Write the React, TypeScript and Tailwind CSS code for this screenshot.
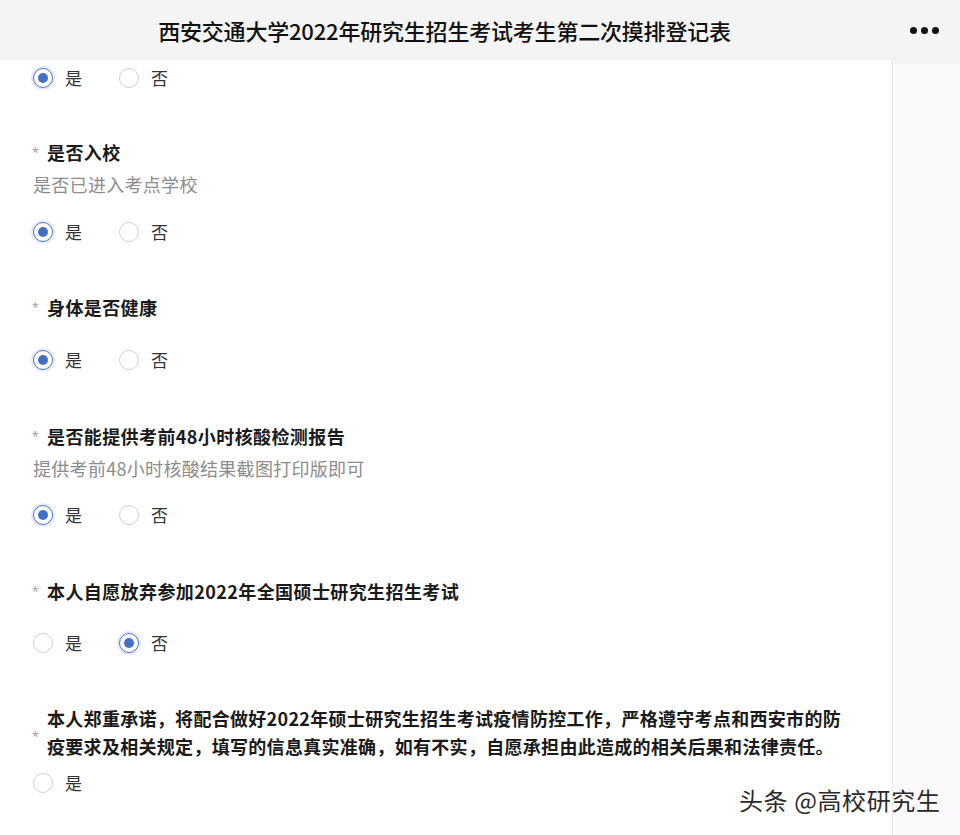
import React from 'react'

type Opt = { label: string; checked?: boolean }

function Radio({ label, checked }: Opt) {
  return (
    <div className="flex items-center w-[86px]">
      {checked ? (
        <span className="w-[20px] h-[20px] rounded-full border border-[#4a74c6] flex items-center justify-center shadow-[0_0_0_2px_rgba(74,116,198,0.15)]">
          <span className="w-[10px] h-[10px] rounded-full bg-[#4470c4]" />
        </span>
      ) : (
        <span className="w-[20px] h-[20px] rounded-full border border-[#cfcfcf] bg-white" />
      )}
      <span className="ml-[12px] text-[17px] text-[#333]">{label}</span>
    </div>
  )
}

function RadioRow({ options, className = '' }: { options: Opt[]; className?: string }) {
  return (
    <div className={`flex items-center h-[36px] ${className}`}>
      {options.map((o) => (
        <Radio key={o.label} {...o} />
      ))}
    </div>
  )
}

function Star({ className = '' }: { className?: string }) {
  return (
    <span
      className={`w-[15px] text-[17px] leading-none text-[#a8a8a8] shrink-0 ${className}`}
      style={{ fontFamily: '"Liberation Sans", sans-serif' }}
    >
      *
    </span>
  )
}

function Title({ children }: { children: React.ReactNode }) {
  return (
    <div className="h-[32px] flex items-center -ml-[1px]">
      <Star className="mt-[2px]" />
      <span className="text-[18px] font-bold text-[#1a1a1a] leading-[28px] tracking-[0.4px]">{children}</span>
    </div>
  )
}

function Desc({ children }: { children: React.ReactNode }) {
  return <div className="h-[32px] flex items-center text-[18px] text-[#8c8c8c] tracking-[0.3px]">{children}</div>
}

const yes: Opt[] = [{ label: '是', checked: true }, { label: '否' }]
const no: Opt[] = [{ label: '是' }, { label: '否', checked: true }]

export default function App() {
  return (
    <div
      className="relative w-[960px] h-[835px] overflow-hidden bg-[#f4f4f4]"
      style={{ fontFamily: '"Noto Sans CJK SC", "Noto Sans", sans-serif' }}
    >
      {/* Header */}
      <div className="h-[60px] flex items-center justify-center relative">
        <h1 className="text-[22px] font-medium text-[#111] tracking-[-0.2px] -ml-[71px]">
          西安交通大学2022年研究生招生考试考生第二次摸排登记表
        </h1>
        <div className="absolute right-[21px] top-[27px] flex gap-[4px]">
          <span className="w-[7px] h-[7px] rounded-full bg-[#111]" />
          <span className="w-[7px] h-[7px] rounded-full bg-[#111]" />
          <span className="w-[7px] h-[7px] rounded-full bg-[#111]" />
        </div>
      </div>

      <div className="flex h-[775px]">
        {/* Form card */}
        <div className="w-[893px] bg-white pl-[33px] border-r border-[#e6e6e6]">
          <RadioRow options={yes} />

          <div className="mt-[40px]">
            <Title>是否入校</Title>
            <Desc>是否已进入考点学校</Desc>
            <RadioRow options={yes} className="mt-[14px]" />
          </div>

          <div className="mt-[41px]">
            <Title>身体是否健康</Title>
            <RadioRow options={yes} className="mt-[19px]" />
          </div>

          <div className="mt-[42px]">
            <Title>是否能提供考前48小时核酸检测报告</Title>
            <Desc>提供考前48小时核酸结果截图打印版即可</Desc>
            <RadioRow options={yes} className="mt-[13px]" />
          </div>

          <div className="mt-[42px]">
            <Title>本人自愿放弃参加2022年全国硕士研究生招生考试</Title>
            <RadioRow options={no} className="mt-[18px]" />
          </div>

          <div className="mt-[43px]">
            <div className="flex items-center -ml-[1px] pr-[40px]">
              <Star className="mt-[10px]" />
              <span className="text-[18px] font-bold text-[#1a1a1a] leading-[28px] tracking-[0.3px]">
                本人郑重承诺，将配合做好2022年硕士研究生招生考试疫情防控工作，严格遵守考点和西安市的防疫要求及相关规定，填写的信息真实准确，如有不实，自愿承担由此造成的相关后果和法律责任。
              </span>
            </div>
            <RadioRow options={[{ label: '是' }]} className="mt-[5px]" />
          </div>
        </div>

        {/* Side strip */}
        <div className="flex-1 bg-[#fcf9fd] mt-[4px]" />
      </div>

      {/* Watermark */}
      <div className="absolute left-[739px] top-[782px] text-[24px] text-[#2a2a2a] tracking-[0.6px]">
        头条 @高校研究生
      </div>
    </div>
  )
}
